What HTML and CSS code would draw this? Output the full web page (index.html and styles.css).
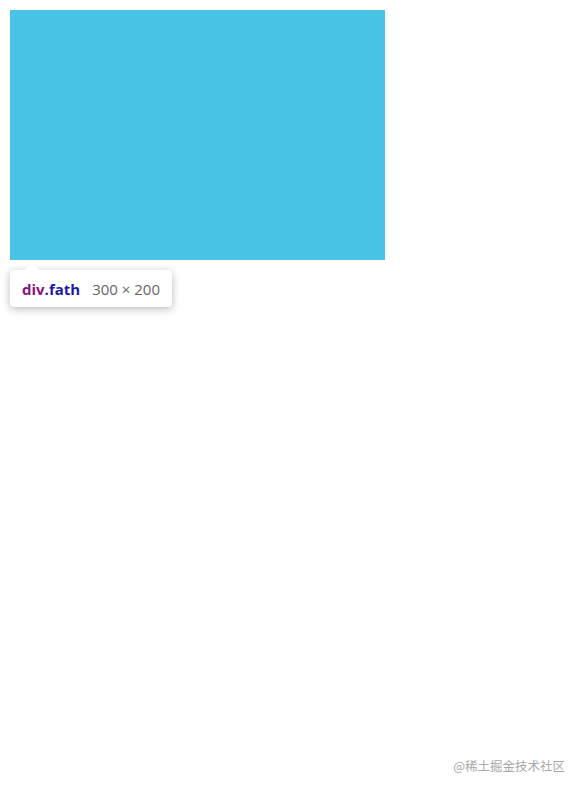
FILE: index.html
```html
<!DOCTYPE html>
<html>
<head>
<meta charset="utf-8">
<link rel="stylesheet" href="styles.css">
</head>
<body>
<div class="fath"></div>
<div class="tooltip">
  <span class="arrow"></span>
  <span class="tag">div</span><span class="cls">.fath</span>
  <span class="size">300 × 200</span>
</div>
<div class="watermark">@稀土掘金技术社区</div>
</body>
</html>
```

FILE: styles.css
```css
html, body {
  margin: 0;
  padding: 0;
  background: #fff;
}
body {
  padding: 10px;
  font-family: "Open Sans", "Noto Sans", "Noto Sans CJK SC", sans-serif;
}
.fath {
  width: 375px;
  height: 250px;
  background: #49c4e7;
}
.tooltip {
  position: absolute;
  left: 10px;
  top: 270px;
  width: 162px;
  height: 37px;
  box-sizing: border-box;
  padding: 1px 12px 0;
  display: flex;
  align-items: center;
  white-space: nowrap;
  background: #fff;
  border-radius: 4px;
  box-shadow: 0 2px 8px rgba(0,0,0,0.28);
  font-size: 15px;
  line-height: 20px;
}
.arrow {
  position: absolute;
  left: 15px;
  top: -7px;
  width: 0;
  height: 0;
  border-left: 7px solid transparent;
  border-right: 7px solid transparent;
  border-bottom: 7px solid #fff;
}
.tag {
  color: #881280;
  font-weight: 700;
}
.cls {
  color: #1a1aa6;
  font-weight: 700;
}
.size {
  color: #666;
  margin-left: 12px;
  font-size: 15px;
}
.watermark {
  position: absolute;
  right: 18px;
  top: 757px;
  font-family: "Noto Sans CJK SC", sans-serif;
  font-size: 12.5px;
  line-height: 18px;
  color: #a8a8a8;
}
```
